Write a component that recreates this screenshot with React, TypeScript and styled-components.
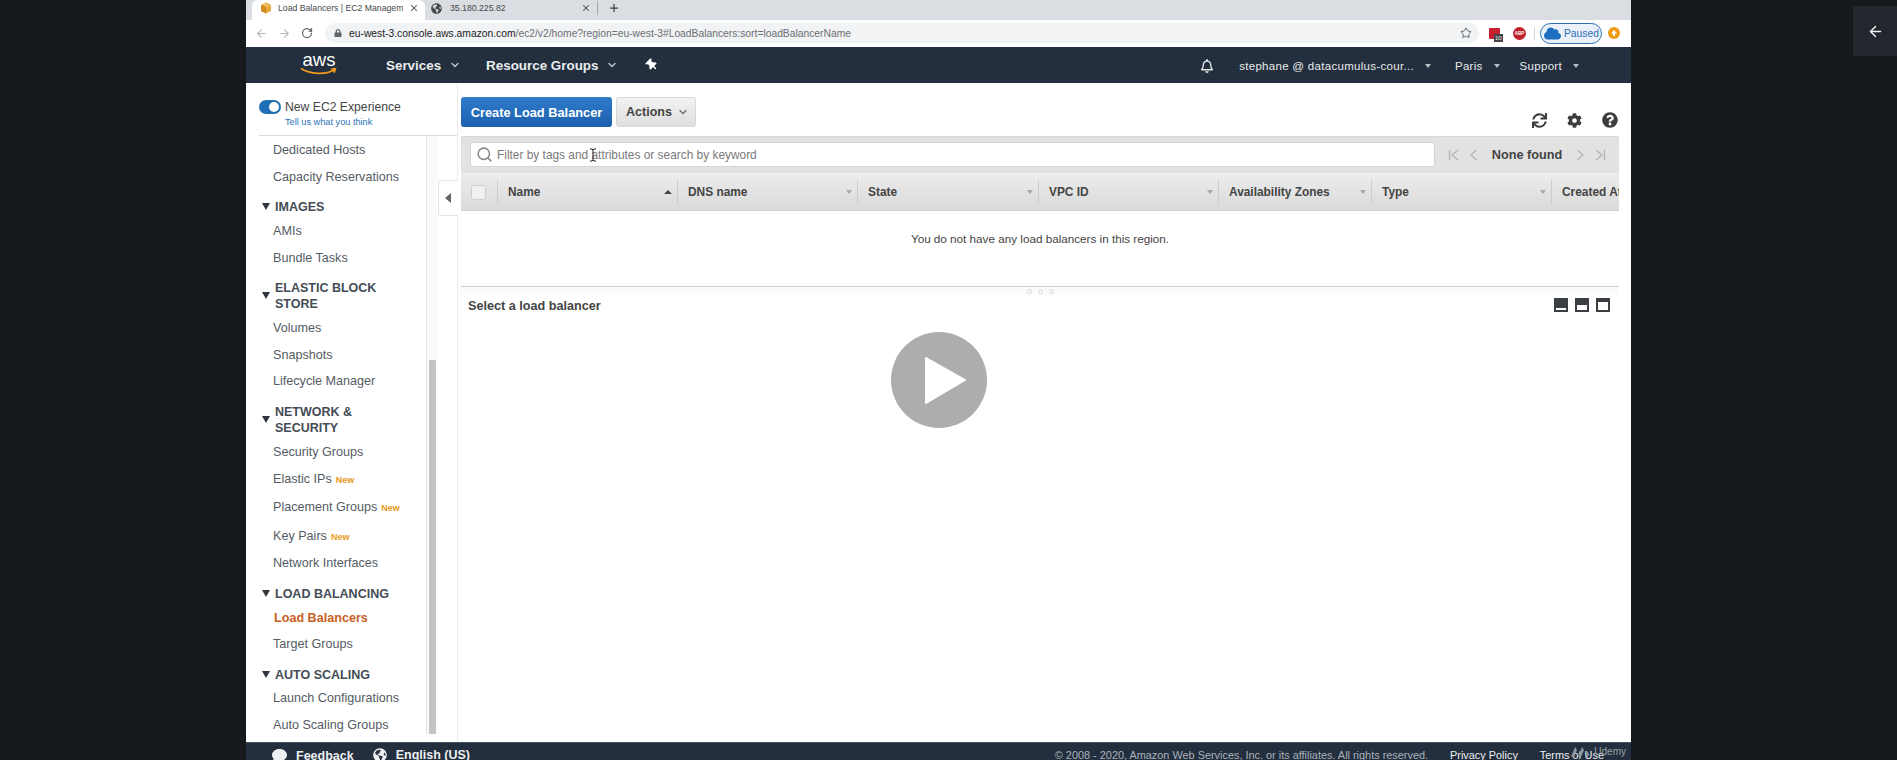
import React from "react";
import { createGlobalStyle, styled } from "styled-components";
import { ArrowLeft, ChevronDown, Plus, RotateCw, Search, Star, X } from "lucide-react";
import {
  FaCloud,
  FaCog,
  FaComment,
  FaGlobeAmericas,
  FaLock,
  FaQuestionCircle,
  FaRegBell,
  FaSync,
  FaThumbtack,
} from "react-icons/fa";

const GlobalStyle = createGlobalStyle`
  html, body {
    margin: 0;
    padding: 0;
    background: #15191c;
    font-family: "Liberation Sans", Arial, sans-serif;
  }
`;

const Page = styled.div`
  display: flex;
  width: 1897px;
  height: 760px;
  overflow: hidden;
  background: #15191c;
`;

const Gutter = styled.div`
  width: 246px;
  flex: none;
`;

const Browser = styled.div`
  position: relative;
  width: 1385px;
  flex: none;
  display: flex;
  flex-direction: column;
  background: #fff;
`;

const SidePanel = styled.div`
  flex: 1;
  display: flex;
  justify-content: flex-end;
  align-items: flex-start;
  padding-top: 6px;
`;

const BackButton = styled.div`
  width: 44px;
  height: 50px;
  background: #22272e;
  color: #f4f4f4;
  display: flex;
  align-items: center;
  justify-content: center;
`;

/* browser chrome */

const TabStrip = styled.div`
  height: 20px;
  flex: none;
  display: flex;
  align-items: center;
  padding-left: 6px;
  background: #dadde1;
  color: #45494d;
  font-size: 8.7px;
`;

const Tab = styled.div<{ $active?: boolean }>`
  width: ${(p) => (p.$active ? 173 : 172)}px;
  height: 20px;
  box-sizing: border-box;
  display: flex;
  align-items: center;
  gap: ${(p) => (p.$active ? 6 : 8)}px;
  padding: 0 6px 4px ${(p) => (p.$active ? 8 : 6)}px;
  background: ${(p) => (p.$active ? "#fff" : "transparent")};
  border-radius: 6px 6px 0 0;
`;

const TabTitle = styled.span`
  flex: 1;
  overflow: hidden;
  white-space: nowrap;
`;

const TabDivider = styled.div`
  width: 1px;
  height: 14px;
  margin-bottom: 4px;
  background: #a9acb0;
`;

const NewTab = styled.div`
  display: flex;
  margin: 0 0 4px 10px;
  color: #3c4043;
`;

const Toolbar = styled.div`
  height: 27px;
  flex: none;
  box-sizing: border-box;
  display: flex;
  align-items: center;
  padding: 0 0 1px 9px;
  color: #5f6368;
`;

const ToolbarButton = styled.div<{ $muted?: boolean }>`
  width: 23px;
  display: flex;
  color: ${(p) => (p.$muted ? "#b5b8bc" : "#5f6368")};
`;

const Omnibox = styled.div`
  width: 1154px;
  height: 20px;
  margin-left: 1px;
  box-sizing: border-box;
  display: flex;
  align-items: center;
  gap: 7px;
  padding: 0 7px 0 9px;
  background: #f1f3f4;
  border-radius: 10px;
`;

const UrlText = styled.div`
  flex: 1;
  font-size: 10.3px;
  color: #6a6e73;
  white-space: nowrap;
`;

const UrlHost = styled.span`
  color: #202124;
`;

const Extensions = styled.div`
  flex: 1;
  display: flex;
  align-items: center;
  padding-left: 10px;
`;

const RedExt = styled.div`
  position: relative;
  width: 11px;
  height: 11px;
  background: #c8202f;
  border-radius: 1px;
  margin-right: 13px;
`;

const ExtBadge = styled.span`
  position: absolute;
  left: 5px;
  top: 6px;
  padding: 0 1px;
  background: #444;
  color: #eee;
  font-size: 6px;
  line-height: 8px;
`;

const AbpExt = styled.div`
  width: 13px;
  height: 13px;
  border-radius: 50%;
  background: #c0202c;
  color: #fff;
  font-size: 4.5px;
  font-weight: 700;
  text-align: center;
  line-height: 13px;
`;

const ExtDivider = styled.div`
  width: 1px;
  height: 13px;
  margin: 0 5px 0 8px;
  background: #d5d7da;
`;

const PausedPill = styled.div`
  width: 62px;
  height: 21px;
  box-sizing: border-box;
  display: flex;
  align-items: center;
  gap: 3px;
  padding-left: 3px;
  border: 1px solid #2f6fb4;
  border-radius: 11px;
  background: #eaf1fa;
  color: #2f6fb4;
  font-size: 10.3px;
`;

const UpdateDot = styled.div`
  width: 12px;
  height: 12px;
  margin-left: 6px;
  border-radius: 50%;
  background: #f09a13;
  display: flex;
  align-items: center;
  justify-content: center;
`;

/* aws console header */

const NavBar = styled.div`
  height: 36px;
  flex: none;
  display: flex;
  align-items: center;
  background: #232f3e;
  color: #fff;
`;

const AwsLogo = styled.div`
  width: 38px;
  margin: 0 48px 0 54px;
  height: 26px;
  display: flex;
  flex-direction: column;
  align-items: center;
`;

const AwsWord = styled.span`
  font-size: 18.5px;
  line-height: 15px;
`;

const NavMain = styled.div<{ $gap?: number }>`
  display: flex;
  align-items: center;
  gap: 8px;
  margin-right: ${(p) => p.$gap ?? 0}px;
  font-size: 13.4px;
  font-weight: 700;
  color: #eaeded;
`;

const NavRight = styled.div`
  margin-left: auto;
  display: flex;
  align-items: center;
  padding: 1px 52px 0 0;
  font-size: 11.5px;
  letter-spacing: 0.3px;
  color: #e8eaea;
`;

const NavItem = styled.div<{ $gap: number }>`
  display: flex;
  align-items: center;
  gap: 11px;
  margin-right: ${(p) => p.$gap}px;
`;

const Caret = styled.span<{ $color?: string }>`
  width: 0;
  height: 0;
  border-left: 3.5px solid transparent;
  border-right: 3.5px solid transparent;
  border-top: 4px solid ${(p) => p.$color ?? "#b8bec4"};
`;

/* page body */

const Content = styled.div`
  flex: 1;
  min-height: 0;
  display: flex;
`;

const Sidebar = styled.div`
  position: relative;
  width: 212px;
  flex: none;
  box-sizing: border-box;
  display: flex;
  flex-direction: column;
  border-right: 1px solid #ececec;
`;

const ExperienceBox = styled.div`
  height: 53px;
  flex: none;
  box-sizing: border-box;
  margin-left: 13px;
  padding-top: 17px;
  display: grid;
  grid-template-columns: 26px 1fr;
  align-content: start;
  border-bottom: 1px solid #dcdcdc;
`;

const Toggle = styled.div`
  width: 22px;
  height: 14px;
  border-radius: 7px;
  background: #1f6fb5;
  display: flex;
  justify-content: flex-end;
  align-items: center;
  padding-right: 2px;
  box-sizing: border-box;
`;

const ToggleKnob = styled.span`
  width: 10px;
  height: 10px;
  border-radius: 50%;
  background: #fff;
`;

const ExperienceLabel = styled.div`
  font-size: 12.2px;
  line-height: 15px;
  color: #444;
`;

const FeedbackLink = styled.div`
  grid-column: 2;
  padding-top: 1px;
  font-size: 9.2px;
  line-height: 12px;
  color: #2a70b3;
`;

const SideBody = styled.div`
  flex: 1;
  min-height: 0;
  display: flex;
  align-items: stretch;
  padding-bottom: 8px;
`;

const NavList = styled.div`
  width: 181px;
  flex: none;
  box-sizing: border-box;
  padding: 1px 0 0 27px;
  overflow: hidden;
  border-right: 1px solid #e4e4e4;
`;

const ScrollTrack = styled.div`
  width: 10px;
  flex: none;
  box-sizing: border-box;
  padding: 224px 1px 0 2px;
  background: #fafafa;
`;

const ScrollThumb = styled.div`
  height: 100%;
  background: #c4c4c4;
  border-radius: 1px;
`;

const SectionTitle = styled.div`
  position: relative;
  margin: 9.2px 0 2.5px -1px;
  padding-left: 3px;
  width: 135px;
  display: flex;
  align-items: center;
  font-size: 12.5px;
  font-weight: 700;
  line-height: 16px;
  color: #444c55;
`;

const SectionCaret = styled.span`
  position: absolute;
  left: -10px;
  top: 50%;
  margin-top: -4px;
  width: 0;
  height: 0;
  border-left: 4.5px solid transparent;
  border-right: 4.5px solid transparent;
  border-top: 7px solid #30363d;
`;

const NavLink = styled.div<{ $active?: boolean; $tall?: boolean }>`
  height: ${(p) => (p.$tall ? 28.4 : 26.6)}px;
  display: flex;
  align-items: center;
  gap: 4px;
  white-space: nowrap;
  padding-left: ${(p) => (p.$active ? 1 : 0)}px;
  font-size: 12.6px;
  font-weight: ${(p) => (p.$active ? 700 : 400)};
  color: ${(p) => (p.$active ? "#c7601e" : "#545b64")};
`;

const NewTag = styled.span`
  font-size: 9px;
  font-weight: 700;
  color: #e99a23;
  padding-top: 2px;
`;

const CollapseTab = styled.div`
  position: absolute;
  right: -1px;
  top: 97px;
  width: 20px;
  height: 36px;
  box-sizing: border-box;
  display: flex;
  align-items: center;
  justify-content: center;
  padding-right: 2px;
  background: #fff;
  border: 1px solid #e4e4e4;
  border-right: none;
  border-radius: 3px 0 0 3px;
`;

const CollapseArrow = styled.span`
  width: 0;
  height: 0;
  border-top: 5px solid transparent;
  border-bottom: 5px solid transparent;
  border-right: 6px solid #666;
`;

const Main = styled.div`
  flex: 1;
  min-width: 0;
  display: flex;
  flex-direction: column;
  padding: 0 12px 0 3px;
`;

const ActionRow = styled.div`
  flex: none;
  height: 53px;
  box-sizing: border-box;
  padding-top: 14px;
  display: flex;
  align-items: flex-start;
  gap: 4px;
`;

const PrimaryButton = styled.div`
  width: 151px;
  height: 30px;
  box-sizing: border-box;
  display: flex;
  align-items: center;
  justify-content: center;
  border-radius: 3px;
  background: linear-gradient(#2f7ccb, #1c5fae);
  color: #fff;
  font-size: 12.8px;
  font-weight: 700;
`;

const SecondaryButton = styled.div`
  width: 80px;
  height: 30px;
  box-sizing: border-box;
  display: flex;
  align-items: center;
  justify-content: center;
  gap: 5px;
  padding-left: 3px;
  border: 1px solid #d8d8d8;
  border-radius: 3px;
  background: linear-gradient(#f3f3f3, #dedede);
  color: #444;
  font-size: 12.5px;
  font-weight: 700;
`;

const ActionIcons = styled.div`
  margin-left: auto;
  display: flex;
  align-items: center;
  gap: 20px;
  padding: 15px 1px 0 0;
  color: #3d3d3d;
`;

const FilterBar = styled.div`
  height: 37px;
  flex: none;
  box-sizing: border-box;
  display: flex;
  align-items: center;
  padding: 0 9px 1px;
  background: #e2e2e2;
  border-top: 1px solid #d8d8d8;
`;

const FilterInput = styled.div`
  position: relative;
  width: 965px;
  height: 25px;
  box-sizing: border-box;
  display: flex;
  align-items: center;
  gap: 4px;
  padding-left: 5px;
  background: #fff;
  border: 1px solid #d5d5d5;
  border-radius: 3px;
  color: #7b7b7b;
  font-size: 11.9px;
`;

const TextCursor = styled.svg`
  position: absolute;
  left: 118px;
  top: 5px;
`;

const Pager = styled.div`
  flex: 1;
  display: flex;
  align-items: center;
  justify-content: space-between;
  padding: 0 4px 0 13px;
  color: #b4b4b4;
`;

const PagerGroup = styled.div`
  display: flex;
  gap: 9px;
`;

const PagerLabel = styled.span`
  color: #444;
  font-size: 12.7px;
  font-weight: 700;
`;

const TableHead = styled.div`
  height: 38px;
  flex: none;
  box-sizing: border-box;
  display: flex;
  align-items: center;
  overflow: hidden;
  background: linear-gradient(#ececec, #dadada);
  border-bottom: 1px solid #d0d0d0;
  border-top: 1px solid #f2f2f2;
`;

const CheckCell = styled.div`
  width: 36px;
  flex: none;
  padding-left: 10px;
  box-sizing: border-box;
`;

const CheckBox = styled.div`
  width: 15px;
  height: 15px;
  box-sizing: border-box;
  background: #f1f1f1;
  border: 1px solid #cfcfcf;
  border-radius: 3px;
`;

const HeadCell = styled.div<{ $w: number }>`
  width: ${(p) => p.$w}px;
  height: 24px;
  flex: none;
  box-sizing: border-box;
  display: flex;
  align-items: center;
  justify-content: space-between;
  padding: 0 5px 0 10px;
  border-left: 1px solid #cdcdcd;
  color: #444;
  font-size: 11.9px;
  font-weight: 700;
  white-space: nowrap;
`;

const SortUp = styled.span`
  width: 0;
  height: 0;
  border-left: 4px solid transparent;
  border-right: 4px solid transparent;
  border-bottom: 4px solid #444;
`;

const EmptyRow = styled.div`
  height: 76px;
  flex: none;
  box-sizing: border-box;
  padding-top: 21px;
  text-align: center;
  font-size: 11.7px;
  line-height: 14px;
  color: #444;
  border-bottom: 1px solid #cdcdcd;
`;

const SplitHandle = styled.div`
  height: 8px;
  flex: none;
  display: flex;
  justify-content: center;
  align-items: center;
  gap: 6px;
  background: #fafafa;
`;

const HandleDot = styled.span`
  width: 3px;
  height: 3px;
  border-radius: 50%;
  border: 1px solid #d8d8d8;
`;

const DetailHead = styled.div`
  display: flex;
  align-items: center;
  justify-content: space-between;
  height: 20px;
  padding: 0 9px 0 7px;
  color: #444;
  font-size: 12.65px;
  font-weight: 700;
`;

const DetailTitle = styled.span`
  padding-top: 2px;
`;

const PaneIcons = styled.div`
  display: flex;
  gap: 7px;
`;

const PaneIcon = styled.div<{ $top: number; $bottom: number }>`
  width: 14px;
  height: 14px;
  box-sizing: border-box;
  background: #3b3f44;
  padding: ${(p) => p.$top}px 2px ${(p) => p.$bottom}px;
  &::after {
    content: "";
    display: block;
    height: 100%;
    background: #fff;
  }
`;

const PlayOverlay = styled.svg`
  position: absolute;
  left: 645px;
  top: 332px;
`;

/* footer */

const Footer = styled.div`
  height: 18px;
  flex: none;
  box-sizing: border-box;
  display: flex;
  align-items: flex-start;
  padding: 5px 0 0 26px;
  background: #232f3e;
  border-top: 1px solid #4a5460;
  color: #eef0f1;
  font-size: 12.5px;
  font-weight: 700;
  line-height: 14px;
  white-space: nowrap;
`;

const FooterItem = styled.div<{ $gap: number }>`
  display: flex;
  align-items: center;
  gap: 9px;
  margin-right: ${(p) => p.$gap}px;
`;

const FooterLegal = styled.div`
  margin-left: auto;
  display: flex;
  padding-right: 27px;
  font-size: 10.9px;
  font-weight: 400;
`;

const Copyright = styled.span`
  color: #aab2b9;
  margin-right: 22px;
`;

const LegalLink = styled.span`
  margin-right: 22px;
  &:last-child {
    margin-right: 0;
  }
`;

const UdemyMark = styled.div`
  position: absolute;
  right: 5px;
  bottom: 3px;
  display: flex;
  align-items: center;
  gap: 3px;
  color: #9aa0a6;
  font-size: 10px;
`;

const columns = [
  { label: "Name", w: 180, sorted: true },
  { label: "DNS name", w: 180 },
  { label: "State", w: 181 },
  { label: "VPC ID", w: 180 },
  { label: "Availability Zones", w: 153 },
  { label: "Type", w: 180 },
  { label: "Created At", w: 180 },
];

type Link = { label: string; isNew?: boolean; active?: boolean };
type Section = { title?: string; links: Link[] };

const sections: Section[] = [
  { links: [{ label: "Dedicated Hosts" }, { label: "Capacity Reservations" }] },
  { title: "IMAGES", links: [{ label: "AMIs" }, { label: "Bundle Tasks" }] },
  {
    title: "ELASTIC BLOCK STORE",
    links: [{ label: "Volumes" }, { label: "Snapshots" }, { label: "Lifecycle Manager" }],
  },
  {
    title: "NETWORK & SECURITY",
    links: [
      { label: "Security Groups" },
      { label: "Elastic IPs", isNew: true },
      { label: "Placement Groups", isNew: true },
      { label: "Key Pairs", isNew: true },
      { label: "Network Interfaces" },
    ],
  },
  {
    title: "LOAD BALANCING",
    links: [{ label: "Load Balancers", active: true }, { label: "Target Groups" }],
  },
  {
    title: "AUTO SCALING",
    links: [{ label: "Launch Configurations" }, { label: "Auto Scaling Groups" }],
  },
];

const CubeIcon = () => (
  <svg width="12" height="12" viewBox="0 0 12 12">
    <path d="M6 0.5 11 3v6l-5 2.5L1 9V3z" fill="#e8a93a" />
    <path d="M6 5.5V11.5L1 9V3z" fill="#d08a1f" />
    <path d="M3.5 1.8 8.5 4.2" stroke="#fff3d6" strokeWidth="0.7" />
  </svg>
);

const AwsSmile = () => (
  <svg width="38" height="9" viewBox="0 0 38 9">
    <path d="M1 1.5C10 7.5 26 8 33.5 3" fill="none" stroke="#f29a1f" strokeWidth="1.6" />
    <path d="M30.5 1.5 36.5 0.8 34.8 6.5z" fill="#f29a1f" />
  </svg>
);

const PageFirst = () => (
  <svg width="12" height="12" viewBox="0 0 12 12" fill="none" stroke="currentColor" strokeWidth="1.3">
    <path d="M1.5 1v10M10 1 4 6l6 5" />
  </svg>
);

const PagePrev = () => (
  <svg width="9" height="12" viewBox="0 0 9 12" fill="none" stroke="currentColor" strokeWidth="1.3">
    <path d="M7.5 1 2 6l5.5 5" />
  </svg>
);

const PageNext = () => (
  <svg width="9" height="12" viewBox="0 0 9 12" fill="none" stroke="currentColor" strokeWidth="1.3">
    <path d="M1.5 1 7 6l-5.5 5" />
  </svg>
);

const PageLast = () => (
  <svg width="12" height="12" viewBox="0 0 12 12" fill="none" stroke="currentColor" strokeWidth="1.3">
    <path d="M10.5 1v10M2 1l6 5-6 5" />
  </svg>
);

const App: React.FC = () => (
  <>
    <GlobalStyle />
    <Page>
      <Gutter />
      <Browser>
        <TabStrip>
          <Tab $active>
            <CubeIcon />
            <TabTitle>Load Balancers | EC2 Manageme</TabTitle>
            <X size={10} strokeWidth={2.5} />
          </Tab>
          <Tab>
            <FaGlobeAmericas size={11} />
            <TabTitle>35.180.225.82</TabTitle>
            <X size={10} strokeWidth={2.5} />
          </Tab>
          <TabDivider />
          <NewTab>
            <Plus size={12} strokeWidth={2.5} />
          </NewTab>
        </TabStrip>

        <Toolbar>
          <ToolbarButton $muted>
            <ArrowLeft size={13} />
          </ToolbarButton>
          <ToolbarButton $muted>
            <ArrowLeft size={13} style={{ transform: "scaleX(-1)" }} />
          </ToolbarButton>
          <ToolbarButton>
            <RotateCw size={12} strokeWidth={2.5} />
          </ToolbarButton>
          <Omnibox>
            <FaLock size={8} />
            <UrlText>
              <UrlHost>eu-west-3.console.aws.amazon.com</UrlHost>
              /ec2/v2/home?region=eu-west-3#LoadBalancers:sort=loadBalancerName
            </UrlText>
            <Star size={12} strokeWidth={2} />
          </Omnibox>
          <Extensions>
            <RedExt>
              <ExtBadge>10</ExtBadge>
            </RedExt>
            <AbpExt>ABP</AbpExt>
            <ExtDivider />
            <PausedPill>
              <FaCloud size={17} color="#1f6fc0" />
              Paused
            </PausedPill>
            <UpdateDot>
              <svg width="8" height="8" viewBox="0 0 8 8">
                <path d="M4 1 7 4.4H5V7H3V4.4H1z" fill="#fff" />
              </svg>
            </UpdateDot>
          </Extensions>
        </Toolbar>

        <NavBar>
          <AwsLogo>
            <AwsWord>aws</AwsWord>
            <AwsSmile />
          </AwsLogo>
          <NavMain $gap={25}>
            Services <ChevronDown size={12} strokeWidth={3} color="#b8bec4" />
          </NavMain>
          <NavMain $gap={28}>
            Resource Groups <ChevronDown size={12} strokeWidth={3} color="#b8bec4" />
          </NavMain>
          <FaThumbtack size={12} color="#fff" style={{ transform: "rotate(-45deg)" }} />
          <NavRight>
            <FaRegBell size={14} style={{ marginRight: 25 }} />
            <NavItem $gap={24}>
              stephane @ datacumulus-cour... <Caret />
            </NavItem>
            <NavItem $gap={20}>
              Paris <Caret />
            </NavItem>
            <NavItem $gap={0}>
              Support <Caret />
            </NavItem>
          </NavRight>
        </NavBar>

        <Content>
          <Sidebar>
            <ExperienceBox>
              <Toggle>
                <ToggleKnob />
              </Toggle>
              <ExperienceLabel>New EC2 Experience</ExperienceLabel>
              <FeedbackLink>Tell us what you think</FeedbackLink>
            </ExperienceBox>
            <SideBody>
              <NavList>
                {sections.map((section, i) => (
                  <React.Fragment key={i}>
                    {section.title && (
                      <SectionTitle>
                        <SectionCaret />
                        {section.title}
                      </SectionTitle>
                    )}
                    {section.links.map((link) => (
                      <NavLink key={link.label} $active={link.active} $tall={link.isNew}>
                        {link.label}
                        {link.isNew && <NewTag>New</NewTag>}
                      </NavLink>
                    ))}
                  </React.Fragment>
                ))}
              </NavList>
              <ScrollTrack>
                <ScrollThumb />
              </ScrollTrack>
            </SideBody>
            <CollapseTab>
              <CollapseArrow />
            </CollapseTab>
          </Sidebar>

          <Main>
            <ActionRow>
              <PrimaryButton>Create Load Balancer</PrimaryButton>
              <SecondaryButton>
                Actions
                <ChevronDown size={12} strokeWidth={3} color="#777" />
              </SecondaryButton>
              <ActionIcons>
                <FaSync size={15} />
                <FaCog size={15} />
                <FaQuestionCircle size={16} />
              </ActionIcons>
            </ActionRow>

            <FilterBar>
              <FilterInput>
                <Search size={17} color="#888" strokeWidth={2.2} />
                Filter by tags and attributes or search by keyword
                <TextCursor width="8" height="14" viewBox="0 0 8 14" fill="none" stroke="#222" strokeWidth="1">
                  <path d="M1 1h2l1 1 1-1h2M4 2v10M1 13h2l1-1 1 1h2" />
                </TextCursor>
              </FilterInput>
              <Pager>
                <PagerGroup>
                  <PageFirst />
                  <PagePrev />
                </PagerGroup>
                <PagerLabel>None found</PagerLabel>
                <PagerGroup>
                  <PageNext />
                  <PageLast />
                </PagerGroup>
              </Pager>
            </FilterBar>

            <TableHead>
              <CheckCell>
                <CheckBox />
              </CheckCell>
              {columns.map((c) => (
                <HeadCell key={c.label} $w={c.w}>
                  {c.label}
                  {c.sorted ? <SortUp /> : <Caret $color="#a8a8a8" />}
                </HeadCell>
              ))}
            </TableHead>

            <EmptyRow>You do not have any load balancers in this region.</EmptyRow>
            <SplitHandle>
              <HandleDot />
              <HandleDot />
              <HandleDot />
            </SplitHandle>

            <DetailHead>
              <DetailTitle>Select a load balancer</DetailTitle>
              <PaneIcons>
                <PaneIcon $top={10} $bottom={2} />
                <PaneIcon $top={7} $bottom={2} />
                <PaneIcon $top={4} $bottom={2} />
              </PaneIcons>
            </DetailHead>
          </Main>
        </Content>

        <Footer>
          <FooterItem $gap={19}>
            <FaComment size={15} />
            Feedback
          </FooterItem>
          <FooterItem $gap={0}>
            <FaGlobeAmericas size={14} />
            English (US)
          </FooterItem>
          <FooterLegal>
            <Copyright>© 2008 - 2020, Amazon Web Services, Inc. or its affiliates. All rights reserved.</Copyright>
            <LegalLink>Privacy Policy</LegalLink>
            <LegalLink>Terms of Use</LegalLink>
          </FooterLegal>
        </Footer>

        <PlayOverlay width="96" height="96" viewBox="0 0 96 96">
          <circle cx="48" cy="48" r="48" fill="#adadad" />
          <path d="M35 26 74 48 35 71z" fill="#fff" stroke="#fff" strokeWidth="2" strokeLinejoin="round" />
        </PlayOverlay>

        <UdemyMark>
          <svg width="22" height="12" viewBox="0 0 22 12" fill="#8f959b">
            <path d="M2 12 6 2l2 3-3 7zM9 12l4-10 2 3-3 7zM16 12l2-6 2 3-1 3z" />
          </svg>
          Udemy
        </UdemyMark>
      </Browser>
      <SidePanel>
        <BackButton>
          <ArrowLeft size={17} strokeWidth={2} />
        </BackButton>
      </SidePanel>
    </Page>
  </>
);

export default App;
